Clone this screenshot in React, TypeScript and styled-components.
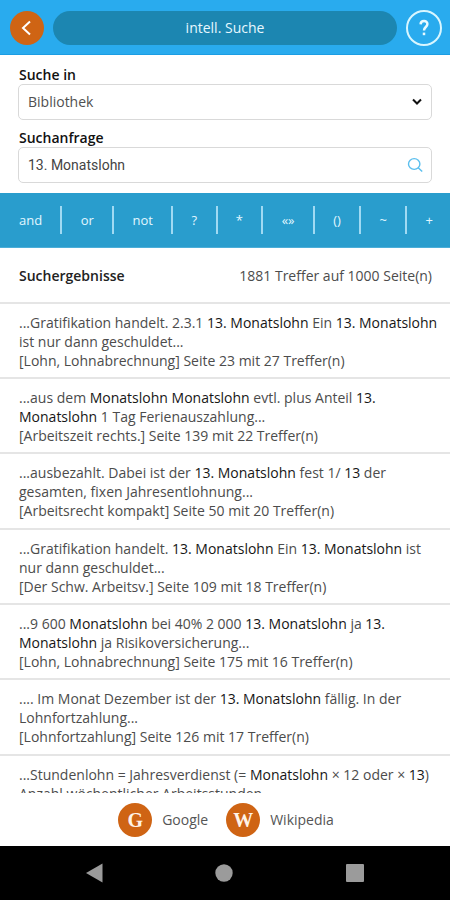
import React from "react";
import styled, { createGlobalStyle } from "styled-components";

const GlobalStyle = createGlobalStyle`
  *, *::before, *::after { box-sizing: border-box; }
  body { margin: 0; background: #fff; }
  body, button, input, select {
    font-family: "Open Sans", "Noto Sans", sans-serif;
    font-size: 14px;
  }
`;

const Screen = styled.div`
  display: flex;
  flex-direction: column;
  height: 100vh;
  color: #4c4c4c;
  line-height: 19px;
`;

const Header = styled.header`
  display: flex;
  align-items: center;
  gap: 9px;
  flex: none;
  height: 55px;
  padding: 1px 8px 0 10px;
  background: #29abee;
  border-bottom: 1px solid #1b9de3;
`;

const Title = styled.h1`
  flex: 1;
  margin: 0;
  height: 34px;
  border-radius: 17px;
  background: #1c86b1;
  color: #e6f8ff;
  font-size: 14px;
  font-weight: 400;
  line-height: 34px;
  text-align: center;
`;

const RoundButton = styled.button<{ $outlined?: boolean }>`
  display: grid;
  place-items: center;
  flex: none;
  width: ${(p) => (p.$outlined ? 36 : 34)}px;
  height: ${(p) => (p.$outlined ? 36 : 34)}px;
  padding: 0;
  border: ${(p) => (p.$outlined ? "2px solid #d8f6ff" : "0")};
  border-radius: 50%;
  background: ${(p) => (p.$outlined ? "transparent" : "#cf6414")};
  color: #fff;
`;

const Form = styled.form`
  display: flex;
  flex-direction: column;
  flex: none;
  gap: 8px;
  padding: 10px 18px;
`;

const Field = styled.div`
  display: flex;
  flex-direction: column;
`;

const Label = styled.label`
  padding-left: 1px;
  color: #111;
  font-weight: 600;
  line-height: 19px;
`;

const Control = styled.div`
  display: grid;
  align-items: center;
  height: 36px;
  border: 1px solid #d9d9d9;
  border-radius: 5px;

  > * { grid-area: 1 / 1; }
  > svg, > button { justify-self: end; margin-right: 8px; }
  > svg { pointer-events: none; }
`;

const Select = styled.select`
  appearance: none;
  width: 100%;
  height: 34px;
  padding: 0 32px 2px 9px;
  border: 0;
  background: transparent;
  color: #505050;
`;

const TextInput = styled.input`
  width: 100%;
  height: 34px;
  padding: 0 32px 0 9px;
  border: 0;
  background: transparent;
  color: #444;
  font-family: Roboto, sans-serif;
`;

const SearchButton = styled.button`
  display: flex;
  padding: 0;
  border: 0;
  background: none;
`;

const Operators = styled.div`
  display: flex;
  align-items: center;
  justify-content: space-between;
  flex: none;
  height: 55px;
  padding: 0 17px 0 19px;
  background: #299dcd;
  border-bottom: 1px solid #4caed8;
`;

const Operator = styled.button`
  padding: 0;
  border: 0;
  background: none;
  color: #e2f7ff;
  font-size: 13px;
`;

const Divider = styled.span`
  width: 2px;
  height: 28px;
  background: #a0daf3;
`;

const Summary = styled.div`
  display: flex;
  align-items: center;
  justify-content: space-between;
  flex: none;
  height: 56px;
  padding: 0 18px 0 19px;
  border-bottom: 2px solid #e5e5e5;
`;

const SummaryTitle = styled.h2`
  margin: 0;
  color: #222;
  font-size: 14px;
  font-weight: 600;
`;

const Results = styled.ul`
  flex: 1;
  min-height: 0;
  margin: 0;
  padding: 0;
  overflow: hidden;
  list-style: none;
`;

const Result = styled.li`
  padding: 9px 12px 7px 19px;
  border-bottom: 2px solid #e5e5e5;

  &:nth-child(3n) { padding-bottom: 8px; }
`;

const Line = styled.div`
  white-space: nowrap;
`;

const Hit = styled.b`
  color: #161616;
  font-weight: 500;
`;

const Sources = styled.footer`
  display: flex;
  align-items: center;
  justify-content: center;
  flex: none;
  gap: 18px;
  height: 53px;
  padding-left: 2px;
`;

const Source = styled.a`
  display: flex;
  align-items: center;
  gap: 10px;
  color: #555;
  text-decoration: none;
`;

const Badge = styled.span`
  width: 34px;
  height: 34px;
  border-radius: 50%;
  background: #cf6414;
  color: #fff3e8;
  font: bold 20px/34px "Liberation Serif", serif;
  text-align: center;
`;

const SystemBar = styled.nav`
  display: flex;
  align-items: center;
  justify-content: space-between;
  flex: none;
  height: 54px;
  padding: 0 85px;
  background: #000;
`;

const SystemButton = styled.button`
  display: flex;
  padding: 0;
  border: 0;
  background: none;
`;

const operators = ["and", "or", "not", "?", "*", "«»", "()", "~", "+"];

/* Each result is a list of lines; search hits are wrapped in asterisks. */
const results: string[][] = [
  ["...Gratifikation handelt. 2.3.1 *13. Monatslohn* Ein *13. Monatslohn*", "ist nur dann geschuldet...", "[Lohn, Lohnabrechnung] Seite 23 mit 27 Treffer(n)"],
  ["...aus dem *Monatslohn Monatslohn* evtl. plus Anteil *13.*", "*Monatslohn* 1 Tag Ferienauszahlung...", "[Arbeitszeit rechts.] Seite 139 mit 22 Treffer(n)"],
  ["...ausbezahlt. Dabei ist der *13. Monatslohn* fest 1/ *13* der", "gesamten, fixen Jahresentlohnung...", "[Arbeitsrecht kompakt] Seite 50 mit 20 Treffer(n)"],
  ["...Gratifikation handelt. *13. Monatslohn* Ein *13. Monatslohn* ist", "nur dann geschuldet...", "[Der Schw. Arbeitsv.] Seite 109 mit 18 Treffer(n)"],
  ["...9 600 *Monatslohn* bei 40% 2 000 *13. Monatslohn* ja *13.*", "*Monatslohn* ja Risikoversicherung...", "[Lohn, Lohnabrechnung] Seite 175 mit 16 Treffer(n)"],
  [".... Im Monat Dezember ist der *13. Monatslohn* fällig. In der", "Lohnfortzahlung...", "[Lohnfortzahlung] Seite 126 mit 17 Treffer(n)"],
  ["...Stundenlohn = Jahresverdienst (= *Monatslohn* × 12 oder × *13*)", "Anzahl wöchentlicher Arbeitsstunden"],
];

function Highlighted({ text }: { text: string }) {
  return (
    <Line>
      {text.split("*").map((part, i) => (i % 2 ? <Hit key={i}>{part}</Hit> : part))}
    </Line>
  );
}

export default function App() {
  return (
    <>
      <GlobalStyle />
      <Screen>
        <Header>
          <RoundButton aria-label="Zurück">
            <svg width="18" height="18" viewBox="0 0 18 18" fill="none" stroke="#fff" strokeWidth="2">
              <path d="M12 2.5 5 9l7 6.5" />
            </svg>
          </RoundButton>
          <Title>intell. Suche</Title>
          <RoundButton $outlined aria-label="Hilfe">
            <svg width="16" height="20" viewBox="0 0 16 20" fill="none" stroke="#e8faff" strokeWidth="2.5">
              <path d="M4.6 6.4C4.7 2 11.4 2 11.4 6c0 3-3.4 3-3.4 6.4" />
              <path d="M8 14.6v2.6" />
            </svg>
          </RoundButton>
        </Header>

        <Form onSubmit={(e) => e.preventDefault()}>
          <Field>
            <Label htmlFor="scope">Suche in</Label>
            <Control>
              <Select id="scope" defaultValue="Bibliothek">
                <option>Bibliothek</option>
              </Select>
              <svg width="12" height="8" viewBox="0 0 12 8" fill="none" stroke="#111" strokeWidth="2">
                <path d="m2 1.5 4 4 4-4" />
              </svg>
            </Control>
          </Field>
          <Field>
            <Label htmlFor="query">Suchanfrage</Label>
            <Control>
              <TextInput id="query" defaultValue="13. Monatslohn" />
              <SearchButton aria-label="Suchen">
                <svg width="16" height="16" viewBox="0 0 16 16" fill="none" stroke="#5bbfee" strokeWidth="1.4">
                  <ellipse cx="7.2" cy="7" rx="5.7" ry="5.4" />
                  <path d="m11.2 10.8 4 3.8" />
                </svg>
              </SearchButton>
            </Control>
          </Field>
        </Form>

        <Operators>
          {operators.map((op, i) => (
            <React.Fragment key={op}>
              {i > 0 && <Divider />}
              <Operator>{op}</Operator>
            </React.Fragment>
          ))}
        </Operators>

        <Summary>
          <SummaryTitle>Suchergebnisse</SummaryTitle>
          <span>1881 Treffer auf 1000 Seite(n)</span>
        </Summary>

        <Results>
          {results.map((lines, i) => (
            <Result key={i}>
              {lines.map((line) => (
                <Highlighted key={line} text={line} />
              ))}
            </Result>
          ))}
        </Results>

        <Sources>
          <Source href="#google">
            <Badge aria-hidden="true">G</Badge>
            Google
          </Source>
          <Source href="#wikipedia">
            <Badge aria-hidden="true">W</Badge>
            Wikipedia
          </Source>
        </Sources>

        <SystemBar>
          <SystemButton aria-label="Zurück">
            <svg width="18" height="20" viewBox="0 0 18 20" fill="#9b9b9b">
              <path d="M17.5.5v19L1 10z" />
            </svg>
          </SystemButton>
          <SystemButton aria-label="Startbildschirm">
            <svg width="18" height="18" viewBox="0 0 18 18" fill="#9b9b9b">
              <circle cx="9" cy="9" r="8.7" />
            </svg>
          </SystemButton>
          <SystemButton aria-label="Übersicht">
            <svg width="20" height="20" viewBox="0 0 20 20" fill="#9b9b9b">
              <rect x="1" y="1" width="18" height="18" rx="1" />
            </svg>
          </SystemButton>
        </SystemBar>
      </Screen>
    </>
  );
}
